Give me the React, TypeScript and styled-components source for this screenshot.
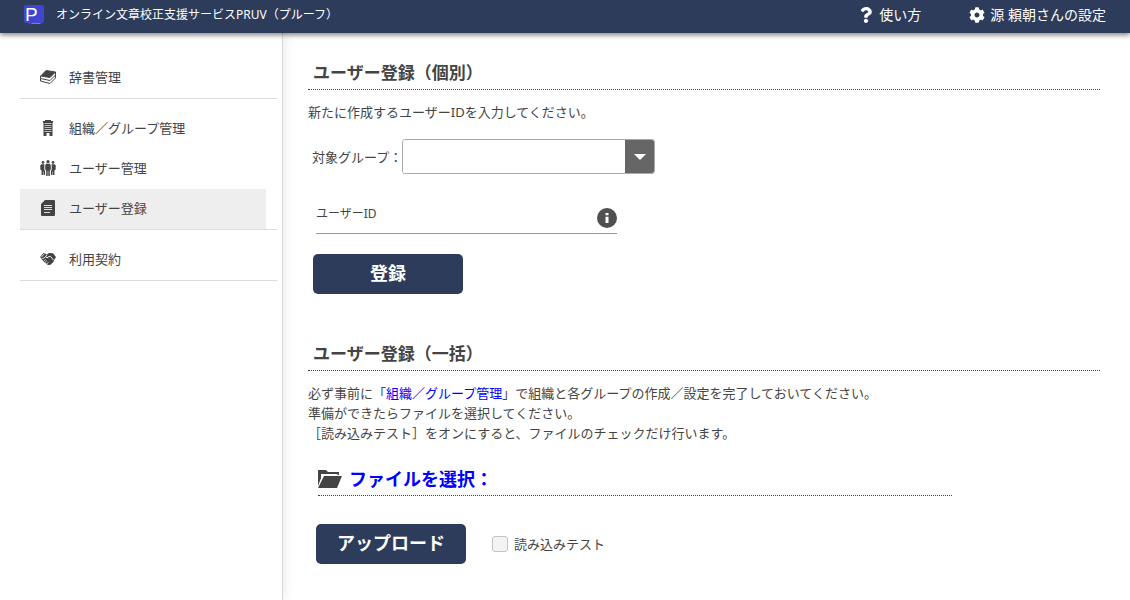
import React, { useRef } from "react";
import styled, { createGlobalStyle, css } from "styled-components";
import { FaCog, FaQuestion } from "react-icons/fa";

const navy = "#2c3c5a";
const ink = "#444";

const GlobalStyle = createGlobalStyle`
  * { box-sizing: border-box; }
  body {
    margin: 0;
    background: #fff;
    color: ${ink};
    font: 13px/20px "Noto Sans", "Noto Sans CJK JP", sans-serif;
  }
  button, input, select { font: inherit; color: inherit; }
  a { text-decoration: none; }
`;

const Page = styled.div`
  display: flex;
  flex-direction: column;
  min-height: 100vh;
`;

const TopBar = styled.header`
  display: flex;
  align-items: center;
  justify-content: space-between;
  height: 33px;
  padding: 0 24px 3px;
  background: ${navy};
  color: #fff;
  box-shadow: 0 2px 5px rgba(60, 40, 40, 0.6);
  z-index: 1;
`;

const Brand = styled.a`
  display: flex;
  align-items: center;
  gap: 12px;
  color: #fff;
  font-size: 12px;
`;

const TopMenu = styled.nav`
  display: flex;
  gap: 48px;
`;

const TopLink = styled.a`
  display: flex;
  align-items: center;
  gap: 5px;
  color: #fff;
  font-size: 14px;
`;

const Body = styled.div`
  display: grid;
  grid-template-columns: 283px 1fr;
  flex: 1;
`;

const Sidebar = styled.nav`
  padding: 15px 5px 0 20px;
  border-right: 1px solid #d8d8d8;
  box-shadow: 2px 0 10px rgba(0, 0, 0, 0.08);
`;

const MenuGroup = styled.ul`
  list-style: none;
  margin: 0;
  padding: 10px 0 0;
  border-bottom: 1px solid #dcdcdc;
`;

const MenuLink = styled.a<{ $active?: boolean }>`
  display: flex;
  align-items: center;
  gap: 13px;
  height: 40px;
  margin-right: 11px;
  padding: 0 20px 2px;
  color: ${ink};
  background: ${(p) => (p.$active ? "#eee" : "transparent")};
`;

const Main = styled.main`
  padding: 23px 30px 36px 25px;
`;

const Section = styled.section`
  & + & { margin-top: 43px; }
`;

const Heading = styled.h2`
  margin: 0 0 12px;
  padding-left: 5px;
  border-bottom: 1px dotted ${ink};
  font-size: 17px;
  line-height: 33px;
`;

const Lead = styled.p`
  margin: 0;
`;

const InlineLink = styled.a`
  color: #00f;
`;

const GroupRow = styled.div`
  display: flex;
  align-items: center;
  margin: 17px 0 20px 4px;
`;

const SelectBox = styled.div`
  display: grid;
  grid-template-columns: 1fr 29px;
  width: 253px;
  height: 35px;
  border: 1px solid #aaa;
  border-radius: 3px;
  overflow: hidden;
`;

const Select = styled.select`
  grid-area: 1 / 1 / 2 / 3;
  appearance: none;
  border: 0;
  padding: 0 36px 0 8px;
  background: #fff;
`;

const SelectArrow = styled.span`
  grid-area: 1 / 2;
  display: grid;
  place-items: center;
  background: #666;
  pointer-events: none;
`;

const IdField = styled.div`
  display: grid;
  grid-template-columns: 1fr 20px;
  align-items: center;
  width: 301px;
  height: 40px;
  margin-left: 8px;
  border-bottom: 1px solid #999;
`;

const IdLabel = styled.label`
  grid-area: 1 / 1;
  font-size: 12px;
  pointer-events: none;
`;

const IdInput = styled.input`
  grid-area: 1 / 1;
  width: 100%;
  height: 38px;
  border: 0;
  padding: 0;
  background: transparent;
  outline: 0;
`;

const InfoButton = styled.button`
  display: block;
  width: 20px;
  height: 20px;
  margin-top: 8px;
  padding: 0;
  border: 0;
  background: none;
  cursor: pointer;
`;

const primary = css`
  width: 150px;
  height: 40px;
  border: 0;
  border-radius: 5px;
  padding: 0 0 2px;
  background: ${navy};
  color: #fff;
  font-size: 18px;
  font-weight: 700;
  cursor: pointer;
`;

const RegisterButton = styled.button`
  ${primary}
  display: block;
  margin: 20px 0 0 5px;
`;

const UploadButton = styled.button`
  ${primary}
`;

const FileRow = styled.div`
  display: flex;
  align-items: center;
  width: 80%;
  height: 33px;
  margin: 20px 0 28px 10px;
  border-bottom: 1px dotted ${ink};
`;

const FileButton = styled.button`
  display: flex;
  align-items: center;
  gap: 7px;
  border: 0;
  padding: 0;
  background: none;
  color: #00f;
  font-size: 18px;
  font-weight: 700;
  cursor: pointer;
`;

const UploadRow = styled.div`
  display: flex;
  align-items: center;
  gap: 26px;
  margin-left: 8px;
`;

const CheckLabel = styled.label`
  display: flex;
  align-items: center;
  gap: 6px;
`;

const CheckBox = styled.input`
  appearance: none;
  width: 16px;
  height: 16px;
  margin: 0;
  border: 1px solid #c4c4c4;
  border-radius: 3px;
  background: #f3f3f3;
  &:checked { background: ${navy}; }
`;

const LogoIcon = () => (
  <svg width="20" height="20" viewBox="0 0 20 20" aria-hidden="true">
    <path d="M6 17h12l-2 2H8z" fill="#888" />
    <path d="M2 0h16a2 2 0 0 1 2 2v14a2 2 0 0 1-2 2H8l-3 2-1-2H2a2 2 0 0 1-2-2V2a2 2 0 0 1 2-2z" fill="#4046d0" />
    <text x="1" y="16" fontFamily="Liberation Sans, sans-serif" fontSize="19" fill="#fff">P</text>
  </svg>
);

const BooksIcon = () => (
  <svg width="16" height="16" viewBox="0 0 16 16" fill="none" stroke={ink} aria-hidden="true">
    <path d="M6 1.500 15.500 3 10 8.500.8 7z" fill={ink} strokeLinejoin="round" />
    <path d="M.5 7v2.500l9.500 2 5.500-5.500V3" />
    <path d="M.5 9.500v2.500l9.500 2.500 5.500-5.500V6" />
  </svg>
);

const BuildingIcon = () => (
  <svg width="16" height="16" viewBox="0 0 16 16" aria-hidden="true">
    <path d="M5 0h6v1h2v2h-.5v13H9.500v-3h-3v3h-3V3H3V1h2z" fill={ink} />
    <path d="M4.500 3.500h7M4.500 5.500h7M4.500 7.500h7M4.500 9.500h7M4.500 11.500h7" stroke="#ccc" strokeWidth=".9" />
  </svg>
);

const PeopleIcon = () => (
  <svg width="16" height="16" viewBox="0 0 16 16" fill={ink} aria-hidden="true">
    <circle cx="8" cy="1.700" r="1.600" />
    <circle cx="3" cy="2.400" r="1.300" />
    <circle cx="13" cy="2.400" r="1.300" />
    <path d="M6.300 3.800h3.400l1.100 1.200v4.500l-1 .8V16H8.300v-5h-.6v5H6.200v-5.700l-1-.8V5z" />
    <path d="M1.300 4.200h3v5.800l.8.800V15H3.500v-3.500H3V15H1.600v-4.500L.3 9.500V5.300zM14.700 4.200h-3v5.800l-.8.800V15h1.600v-3.500h.5V15h1.400v-4.500l1.300-1V5.300z" />
  </svg>
);

const DocumentIcon = () => (
  <svg width="16" height="16" viewBox="0 0 16 16" aria-hidden="true">
    <path d="M5 0h9a1 1 0 0 1 1 1v14a1 1 0 0 1-1 1H2a1 1 0 0 1-1-1V4z" fill={ink} />
    <path d="M4 5.500h8M4 7.500h8M4 9.500h8M4 12.500h6" stroke="#ddd" />
  </svg>
);

const HandshakeIcon = () => (
  <svg width="16" height="16" viewBox="0 0 16 16" aria-hidden="true">
    <path d="M0 6 3.500 2 7 3.200 9 2l4 .3L16 6l-2 3.500-1 2L10 14H8L3.500 10.500z" fill={ink} />
    <path d="M1 6.500 4.200 3M1.800 8 5 6.300M3.500 10l2-1.500M5 11.500l1.800-1.700M6.800 13l1.500-1.700" stroke="#fff" strokeWidth=".8" />
    <path d="M7 3.500 5.500 6l1.500.8L9 5.500h1.500l3 3.500" fill="none" stroke="#fff" strokeWidth=".9" />
  </svg>
);

const FolderIcon = () => (
  <svg width="24" height="18" viewBox="0 0 24 18" aria-hidden="true">
    <path d="M0 0h8l2 2h11v3h-1.500V4H3v4L0 16z" fill={ink} />
    <path d="M6 6h18l-5 12H0z" fill={ink} />
  </svg>
);

const InfoIcon = () => (
  <svg width="20" height="20" viewBox="0 0 20 20" aria-hidden="true">
    <circle cx="10" cy="10" r="10" fill="#505050" />
    <path d="M8.500 5h3v2.300h-3zM8.500 8.700h3V15h-3z" fill="#fff" />
  </svg>
);

const menu = [
  [{ label: "辞書管理", icon: <BooksIcon /> }],
  [
    { label: "組織／グループ管理", icon: <BuildingIcon /> },
    { label: "ユーザー管理", icon: <PeopleIcon /> },
    { label: "ユーザー登録", icon: <DocumentIcon />, active: true },
  ],
  [{ label: "利用契約", icon: <HandshakeIcon /> }],
];

export default function App() {
  const fileInput = useRef<HTMLInputElement>(null);

  return (
    <Page lang="ja">
      <GlobalStyle />
      <TopBar>
        <Brand href="#">
          <LogoIcon />
          オンライン文章校正支援サービスPRUV（プルーフ）
        </Brand>
        <TopMenu>
          <TopLink href="#">
            <FaQuestion size={16} />
            使い方
          </TopLink>
          <TopLink href="#">
            <FaCog size={16} />
            源 頼朝さんの設定
          </TopLink>
        </TopMenu>
      </TopBar>
      <Body>
        <Sidebar>
          {menu.map((group, i) => (
            <MenuGroup key={i}>
              {group.map((item) => (
                <li key={item.label}>
                  <MenuLink href="#" $active={"active" in item}>
                    {item.icon}
                    {item.label}
                  </MenuLink>
                </li>
              ))}
            </MenuGroup>
          ))}
        </Sidebar>
        <Main>
          <Section>
            <Heading>ユーザー登録（個別）</Heading>
            <Lead>新たに作成するユーザーIDを入力してください。</Lead>
            <GroupRow>
              <label htmlFor="group">対象グループ：</label>
              <SelectBox>
                <Select id="group" />
                <SelectArrow>
                  <svg width="12" height="6" viewBox="0 0 12 6" aria-hidden="true">
                    <path d="M0 0h12L6 6z" fill="#fff" />
                  </svg>
                </SelectArrow>
              </SelectBox>
            </GroupRow>
            <IdField>
              <IdLabel htmlFor="user-id">ユーザーID</IdLabel>
              <IdInput id="user-id" type="text" />
              <InfoButton type="button" aria-label="ユーザーIDについて">
                <InfoIcon />
              </InfoButton>
            </IdField>
            <RegisterButton type="button">登録</RegisterButton>
          </Section>
          <Section>
            <Heading>ユーザー登録（一括）</Heading>
            <Lead>
              必ず事前に「<InlineLink href="#">組織／グループ管理</InlineLink>」で組織と各グループの作成／設定を完了しておいてください。
              <br />
              準備ができたらファイルを選択してください。
              <br />
              ［読み込みテスト］をオンにすると、ファイルのチェックだけ行います。
            </Lead>
            <FileRow>
              <FileButton type="button" onClick={() => fileInput.current?.click()}>
                <FolderIcon />
                ファイルを選択：
              </FileButton>
              <input ref={fileInput} type="file" hidden />
            </FileRow>
            <UploadRow>
              <UploadButton type="button">アップロード</UploadButton>
              <CheckLabel>
                <CheckBox type="checkbox" />
                読み込みテスト
              </CheckLabel>
            </UploadRow>
          </Section>
        </Main>
      </Body>
    </Page>
  );
}
